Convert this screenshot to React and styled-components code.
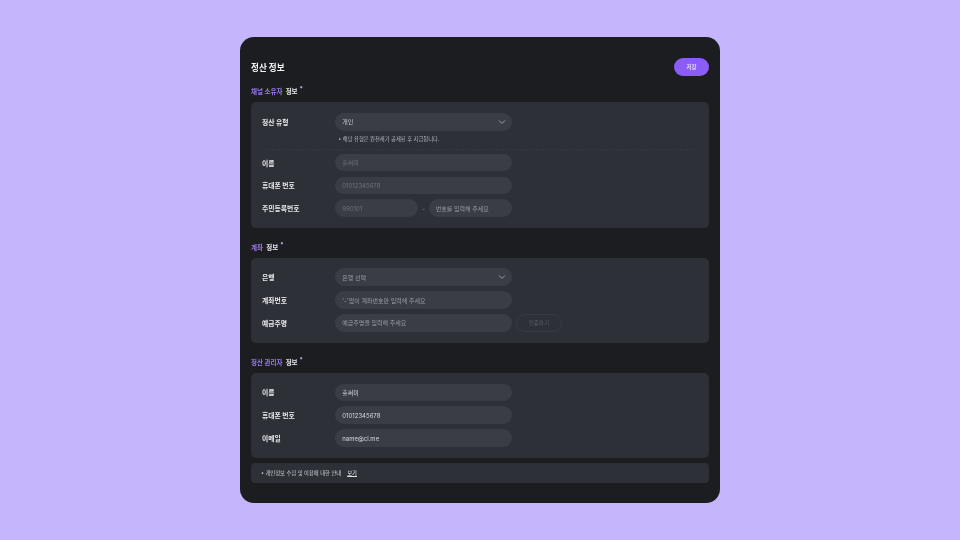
import React from "react";
import styled, { createGlobalStyle } from "styled-components";

const GlobalStyle = createGlobalStyle`
  * { box-sizing: border-box; }
  html, body { margin: 0; padding: 0; }
  body {
    background: #c4b5fd;
    font-family: "Inter", "Noto Sans CJK KR", sans-serif;
  }
`;

const Page = styled.div`
  width: 960px;
  height: 540px;
  display: flex;
  align-items: flex-start;
  justify-content: center;
  padding-top: 37px;
`;

const Card = styled.div`
  width: 480px;
  height: 466px;
  background: #1c1d21;
  border-radius: 14px;
  padding: 21px 10.8px 0 11px;
  will-change: transform;
`;

const Header = styled.div`
  display: flex;
  align-items: center;
  justify-content: space-between;
  height: 18px;
`;

const Title = styled.h1`
  margin: 0;
  padding-top: 1px;
  font-size: 8.6px;
  line-height: 18px;
  font-weight: 700;
  color: #f1f1f3;
`;

const SaveButton = styled.button`
  width: 35.4px;
  height: 18px;
  border: 0;
  padding: 0;
  border-radius: 9px;
  background: #8b5cf6;
  color: #f3eefe;
  font-family: inherit;
  font-size: 5.5px;
  font-weight: 500;
`;

const SectionTitle = styled.div`
  display: flex;
  align-items: center;
  height: 12px;
  margin-top: ${(p) => p.$top}px;
  margin-bottom: 5px;
  font-size: 6.5px;
  font-weight: 700;
  color: #e6e6ea;

  b {
    color: #9d7bea;
    font-weight: 700;
    margin-right: 3.2px;
  }

  i {
    font-style: normal;
    color: #c4b5fd;
    font-size: 6px;
    margin: -5px 0 0 2px;
  }
`;

const Panel = styled.div`
  background: #2d3037;
  border-radius: 5px;
  padding: ${(p) => p.$pad} 11px 0;
  height: ${(p) => p.$height}px;
  display: flex;
  flex-direction: column;
  gap: 5.2px;
`;

const Row = styled.div`
  display: flex;
  align-items: center;
  height: 17.7px;
`;

const Label = styled.div`
  width: 73.3px;
  flex: none;
  font-size: 6.8px;
  font-weight: 700;
  color: #e8e8ec;
`;

const Field = styled.div`
  width: ${(p) => p.$width || 177}px;
  height: 17.7px;
  flex: none;
  display: flex;
  align-items: center;
  justify-content: space-between;
  padding: 0 6px 0 7px;
  border-radius: 9px;
  background: #3a3d46;
  font-size: 6px;
  color: ${(p) => p.$color || "#9a9ca5"};
`;

const Hint = styled.div`
  margin: -0.6px 0 -0.8px 73.3px;
  padding-left: 3px;
  height: 9px;
  font-size: 5.3px;
  line-height: 9px;
  color: #b4b6bd;
`;

const Divider = styled.div`
  border-top: 1px dashed #363941;
  margin-bottom: -1.2px;
`;

const Dash = styled.span`
  width: 10.5px;
  text-align: center;
  color: #8d8f98;
  font-size: 6px;
`;

const VerifyButton = styled.button`
  width: 46.5px;
  height: 17.7px;
  margin-left: 3.3px;
  padding: 0;
  background: transparent;
  border: 1px solid #383b43;
  border-radius: 9px;
  color: #5c5e66;
  font-family: inherit;
  font-size: 5.5px;
`;

const Notice = styled.div`
  display: flex;
  align-items: center;
  height: 20px;
  margin-top: 5px;
  padding: 1px 10px 0;
  background: #2d3037;
  border-radius: 4px;
  font-size: 5.3px;
  color: #d0d1d6;

  a {
    margin-left: 6px;
    color: #e2e2e6;
    text-decoration: underline;
  }
`;

function Chevron() {
  return (
    <svg width="8" height="8" viewBox="0 0 8 8" fill="none">
      <path d="M1 2.4 L4 5.4 L7 2.4" stroke="#a6a8b0" strokeWidth="0.9" />
    </svg>
  );
}

export default function App() {
  return (
    <>
      <GlobalStyle />
      <Page>
        <Card>
          <Header>
            <Title>정산 정보</Title>
            <SaveButton>저장</SaveButton>
          </Header>

          <SectionTitle $top={9}>
            <b>채널 소유자</b> 정보 <i>*</i>
          </SectionTitle>
          <Panel $height={125.7} $pad="11px">
            <Row>
              <Label>정산 유형</Label>
              <Field $color="#c5c6cc">
                개인
                <Chevron />
              </Field>
            </Row>
            <Hint>• 해당 유형은 원천세가 공제된 후 지급됩니다.</Hint>
            <Divider />
            <Row>
              <Label>이름</Label>
              <Field $color="#6f717a">홍써미</Field>
            </Row>
            <Row>
              <Label>휴대폰 번호</Label>
              <Field $color="#6f717a">01012345678</Field>
            </Row>
            <Row>
              <Label>주민등록번호</Label>
              <Field $width={83} $color="#6f717a">990101</Field>
              <Dash>-</Dash>
              <Field $width={83}>번호를 입력해 주세요</Field>
            </Row>
          </Panel>

          <SectionTitle $top={13}>
            <b>계좌</b> 정보 <i>*</i>
          </SectionTitle>
          <Panel $height={85} $pad="10.6px">
            <Row>
              <Label>은행</Label>
              <Field>
                은행 선택
                <Chevron />
              </Field>
            </Row>
            <Row>
              <Label>계좌번호</Label>
              <Field>'-'없이 계좌번호만 입력해 주세요</Field>
            </Row>
            <Row>
              <Label>예금주명</Label>
              <Field>예금주명을 입력해 주세요</Field>
              <VerifyButton>인증하기</VerifyButton>
            </Row>
          </Panel>

          <SectionTitle $top={13.3}>
            <b>정산 관리자</b> 정보 <i>*</i>
          </SectionTitle>
          <Panel $height={85} $pad="10.6px">
            <Row>
              <Label>이름</Label>
              <Field $color="#d8d9dd">홍써미</Field>
            </Row>
            <Row>
              <Label>휴대폰 번호</Label>
              <Field $color="#d8d9dd">01012345678</Field>
            </Row>
            <Row>
              <Label>이메일</Label>
              <Field $color="#d8d9dd">name@cl.me</Field>
            </Row>
          </Panel>

          <Notice>
            • 개인정보 수집 및 이용에 대한 안내 <a>보기</a>
          </Notice>
        </Card>
      </Page>
    </>
  );
}
